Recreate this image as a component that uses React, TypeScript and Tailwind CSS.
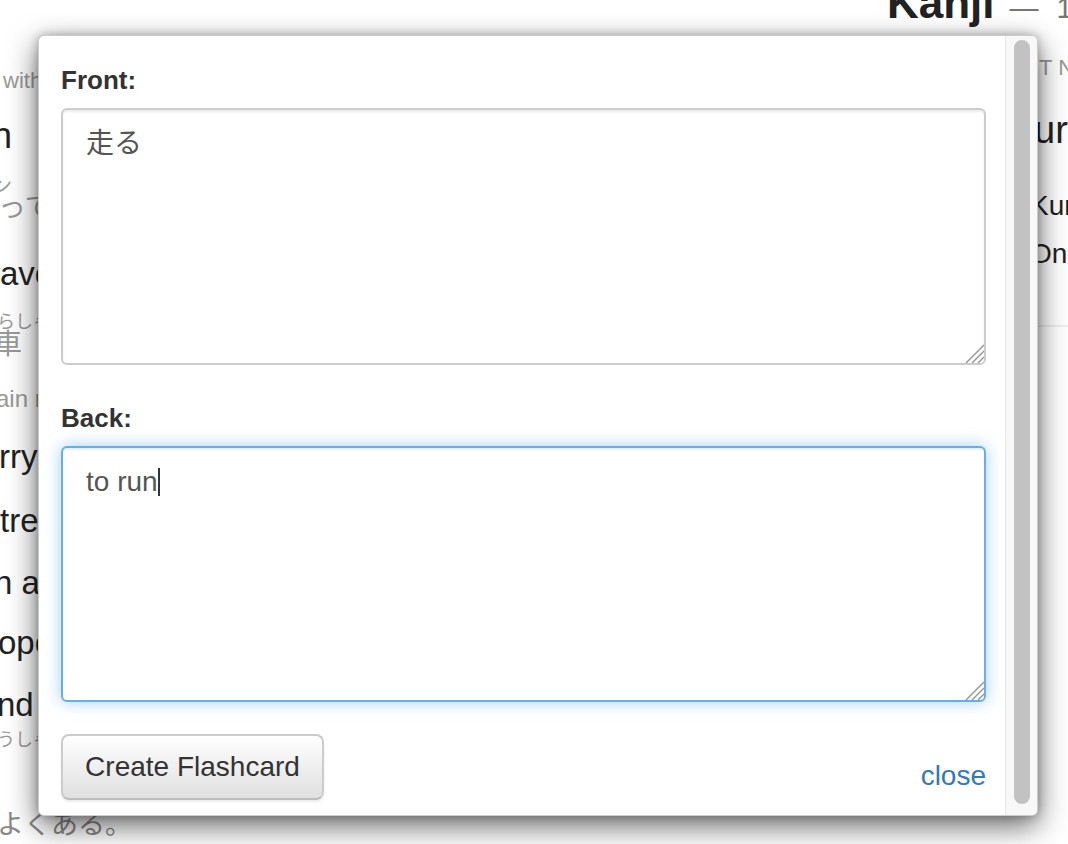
import React from "react";

function ResizeHandle() {
  return (
    <svg
      className="absolute right-0 bottom-0"
      width="20"
      height="20"
      viewBox="0 0 20 20"
    >
      <path d="M2 20 L20 2 M8 20 L20 8 M14 20 L20 14" stroke="#9a9a9a" strokeWidth="1.5" fill="none" />
    </svg>
  );
}

export default function App() {
  return (
    <div className="relative w-[1068px] h-[844px] overflow-hidden bg-white font-['Liberation_Sans','Noto_Sans_CJK_JP',sans-serif]">
      {/* background page */}
      <div className="flex h-full">
        {/* left column */}
        <div className="w-[38px] shrink-0 flex flex-col whitespace-nowrap">
          <div className="mt-[66px] ml-[3px] text-[22px] leading-[30px] text-[#999]">with</div>
          <div className="mt-[18px] text-[36px] leading-[44px] text-[#222] -ml-[8px]">n</div>
          <div className="mt-[18px] text-[20px] leading-[20px] text-[#999] -ml-[8px]">ン</div>
          <div className="text-[28px] leading-[24px] text-[#999] -ml-[2px]">って</div>
          <div className="mt-[32px] text-[33px] leading-[44px] text-[#222]">ave</div>
          <div className="mt-[16px] text-[18px] leading-[20px] text-[#999] -ml-[3px]">らしゃ</div>
          <div className="text-[28px] leading-[26px] text-[#999] -ml-[6px]">車</div>
          <div className="mt-[25px] text-[24px] leading-[32px] text-[#999] -ml-[4px]">ain r</div>
          <div className="mt-[20px] text-[33px] leading-[44px] text-[#222] -ml-[1px]">rry</div>
          <div className="mt-[20px] text-[33px] leading-[44px] text-[#222]">trea</div>
          <div className="mt-[18px] text-[33px] leading-[44px] text-[#222] -ml-[6px]">n a</div>
          <div className="mt-[16px] text-[33px] leading-[44px] text-[#222] -ml-[2px]">ope</div>
          <div className="mt-[18px] text-[33px] leading-[44px] text-[#222] -ml-[3px]">nd</div>
          <div className="mt-[3px] text-[18px] leading-[20px] text-[#999] -ml-[3px]">うしゃ</div>
          <div className="mt-[59px] text-[27px] leading-[32px] text-[#888] -ml-[3px]">よくある。</div>
        </div>
        {/* centre column (under the dialog) */}
        <div className="w-[992px] shrink-0 whitespace-nowrap">
          <h1 className="-mt-[22px] pl-[849px] text-[44px] leading-[50px] font-bold text-[#222]">
            Kanji
            <span className="ml-[15px] text-[29px] font-normal text-[#777]">—</span>
            <span className="ml-[18px] text-[29px] font-normal text-[#777]">1</span>
          </h1>
        </div>
        {/* right column */}
        <div className="flex-1 flex flex-col whitespace-nowrap">
          <div className="mt-[53px] ml-[9px] text-[22px] leading-[30px] text-[#999]">T N5</div>
          <div className="mt-[23px] ml-[4px] text-[38px] leading-[48px] text-[#222]">ur</div>
          <div className="mt-[32px] text-[28px] leading-[40px] text-[#222]">Kun</div>
          <div className="mt-[8px] text-[28px] leading-[40px] text-[#222]">On</div>
          <div className="mt-[51px] h-[2px] bg-[#eeeeee]" />
        </div>
      </div>

      {/* dialog overlay */}
      <div className="absolute left-[38px] top-[35px] w-[1000px] flex rounded-[6px] border border-black/20 bg-white shadow-[0_10px_30px_rgba(0,0,0,0.6),0_0_10px_rgba(0,0,0,0.25)]">
        <div className="flex-1 pl-[22px] pr-[19px] pt-[24px] pb-[15px] flex flex-col">
          <label className="block h-[40px] text-[26px] leading-[40px] font-bold text-[#333]">Front:</label>
          <div className="relative mt-[8px] h-[257px] rounded-[6px] border-2 border-[#cccccc] bg-white px-[23px] pt-[14px] pb-[10px] text-[28px] leading-[40px] text-[#555] shadow-[inset_0_2px_2px_rgba(0,0,0,0.075)]">
            走る
            <ResizeHandle />
          </div>
          <label className="mt-[33px] block h-[40px] text-[26px] leading-[40px] font-bold text-[#333]">Back:</label>
          <div className="relative mt-[8px] h-[256px] rounded-[6px] border-2 border-[#66afe9] bg-white px-[23px] pt-[14px] pb-[10px] text-[28px] leading-[40px] text-[#555] shadow-[inset_0_2px_2px_rgba(0,0,0,0.075),0_0_16px_rgba(102,175,233,0.6)]">
            <span className="inline-flex items-center">
              to run
              <span className="inline-block w-[2px] h-[28px] bg-[#333]" />
            </span>
            <ResizeHandle />
          </div>
          <div className="mt-[32px] flex items-end justify-between">
            <button className="h-[66px] w-[263px] rounded-[8px] border-2 border-[#cccccc] border-b-[#bdbdbd] bg-gradient-to-b from-white to-[#e0e0e0] text-[28px] leading-[40px] text-[#333] shadow-[0_2px_2px_rgba(0,0,0,0.075)]">
              Create Flashcard
            </button>
            <a className="mb-[4px] text-[28px] leading-[40px] text-[#337ab7]">close</a>
          </div>
        </div>
        {/* scrollbar */}
        <div className="w-[32px] shrink-0 flex flex-col border-l border-[#e6e6e6] bg-[#f8f8f8] pl-[8px] pr-[7px] pt-[4px] pb-[11px] rounded-r-[6px]">
          <div className="flex-1 rounded-full bg-[#c2c2c2]" />
        </div>
      </div>
    </div>
  );
}
